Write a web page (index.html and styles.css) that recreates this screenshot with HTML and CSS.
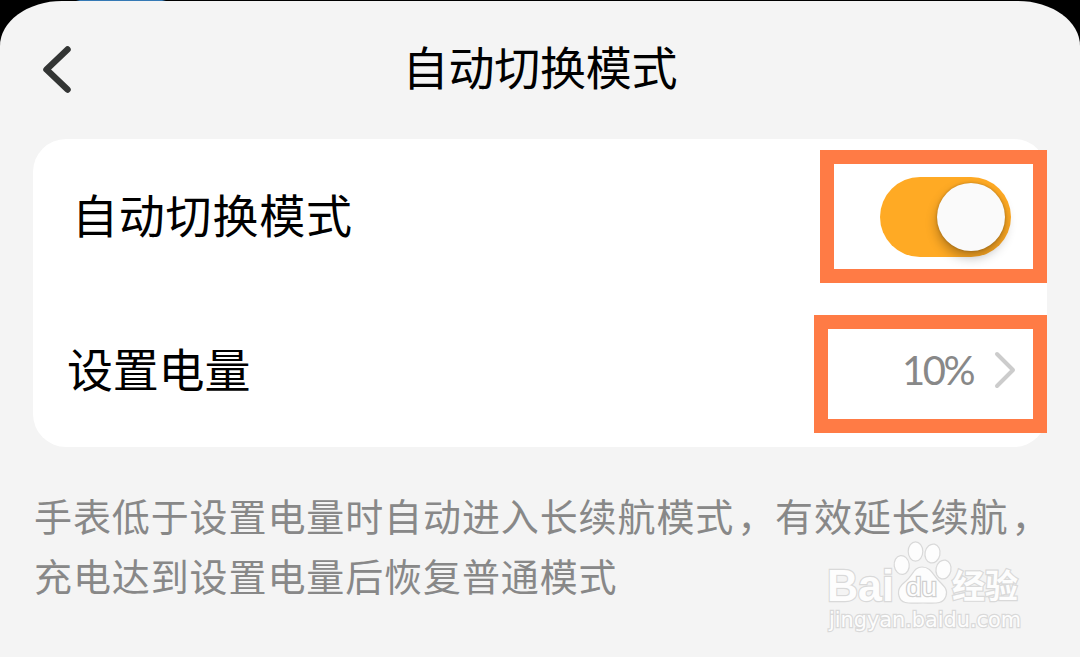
FILE: index.html
```html
<!DOCTYPE html>
<html lang="zh-CN">
<head>
    <meta charset="UTF-8">
    <meta name="viewport" content="width=device-width, initial-scale=1.0">
    <title>自动切换模式</title>
    <link rel="stylesheet" href="styles.css">
</head>
<body>

    <div class="page">
        <!-- Header -->
        <header class="header">
            <svg class="back-icon" width="36" height="54" viewBox="0 0 36 54">
                <path d="M29.5 6.5 L8.5 26.5 L29.5 46.5"/>
            </svg>
            <h1 class="title">自动切换模式</h1>
        </header>

        <!-- Settings -->
        <div class="card">
            <div class="row row-switch">
                <span class="label label-switch">自动切换模式</span>
                <div class="highlight highlight-switch">
                    <div class="switch"><div class="knob"></div></div>
                </div>
            </div>
            <div class="row row-battery">
                <span class="label label-battery">设置电量</span>
                <div class="highlight highlight-battery">
                    <span class="value">10%</span>
                    <svg class="arrow-icon" width="22" height="40" viewBox="0 0 22 40">
                        <path d="M3 4 L19 20 L3 36"/>
                    </svg>
                </div>
            </div>
        </div>

        <p class="hint">手表低于设置电量时自动进入长续航模式<span class="comma">，</span>有效延长续航<span class="comma">，</span><br>充电达到设置电量后恢复普通模式</p>

        <!-- Watermark -->
        <svg class="watermark" width="210" height="100" viewBox="0 0 210 100">
            <g class="mark">
                <text class="mark-brand" x="1" y="62" textLength="67" lengthAdjust="spacingAndGlyphs">Bai</text>
                <ellipse cx="75.7" cy="26" rx="7.5" ry="9.5" transform="rotate(-8 75.7 26)"/>
                <ellipse cx="89.5" cy="12.5" rx="7.3" ry="9.7"/>
                <ellipse cx="106.5" cy="14.5" rx="7.5" ry="9.5" transform="rotate(12 106.5 14.5)"/>
                <ellipse cx="117.5" cy="30.5" rx="7.5" ry="9.5" transform="rotate(12 117.5 30.5)"/>
                <path d="M96 28 C105 28 107 36 113 42 C119 48 122 51 120 57 C117 66 108 64 97 64 C85 64 75 66 73 57 C71 50 75 46 80 42 C87 36 88 28 96 28 Z"/>
                <text class="mark-du" x="80" y="57" textLength="31" lengthAdjust="spacingAndGlyphs">du</text>
                <text class="mark-cn" x="126" y="59" textLength="66" lengthAdjust="spacingAndGlyphs">经验</text>
                <text class="mark-url" x="3" y="88" textLength="192" lengthAdjust="spacingAndGlyphs">jingyan.baidu.com</text>
            </g>
        </svg>
    </div>

</body>
</html>
```
FILE: styles.css
```css
* {
    box-sizing: border-box;
}

body {
    margin: 0;
    padding-top: 1px;
    height: 657px;
    overflow: hidden;
    font-family: "Noto Sans CJK SC", sans-serif;
    background: linear-gradient(to right, #000 76px, #3579b5 80px, #3579b5 162px, #000 166px);
    background-size: 100% 1px;
    background-repeat: no-repeat;
    background-color: #000;
}

.page {
    position: relative;
    height: 656px;
    background-color: #f4f4f4;
    border-radius: 62px 62px 0 0 / 45px 45px 0 0;
}

.header {
    display: flex;
    align-items: center;
    height: 138px;
    padding: 0 36px 0 38px;
}

.back-icon {
    fill: none;
    stroke: #333534;
    stroke-width: 6.5;
    stroke-linecap: round;
    stroke-linejoin: round;
}

.title {
    flex: 1;
    margin: 0 38px 10px 0;
    font-size: 46px;
    line-height: 64px;
    font-weight: 400;
    letter-spacing: -0.2px;
    text-align: center;
    color: #000;
}

/* Settings card */
.card {
    display: flex;
    flex-direction: column;
    gap: 32px;
    height: 308px;
    margin: 0 33px;
    padding: 11px 0 14px;
    background-color: #fff;
    border-radius: 33px;
}

.row {
    display: flex;
    align-items: center;
    justify-content: space-between;
}

.label {
    font-size: 46px;
    line-height: 64px;
    color: #000;
}

.label-switch {
    padding: 0 0 8px 39px;
    letter-spacing: 0.8px;
}

.label-battery {
    padding: 0 0 14px 34px;
    letter-spacing: -0.2px;
}

.highlight {
    display: flex;
    align-items: center;
    justify-content: flex-end;
    border: 14px solid #ff7b45;
}

.highlight-switch {
    width: 227px;
    height: 133px;
    padding-right: 22px;
}

.highlight-battery {
    width: 233px;
    height: 118px;
    padding: 0 17px 8px 0;
    gap: 21px;
}

.switch {
    display: flex;
    align-items: center;
    justify-content: flex-end;
    width: 131px;
    height: 80px;
    padding-right: 6px;
    border-radius: 40px;
    background-color: #ffaa24;
}

.knob {
    width: 68px;
    height: 68px;
    border-radius: 50%;
    background-color: #fafafa;
    box-shadow: 0 6px 12px rgba(0, 0, 0, 0.3), 0 0 3px rgba(0, 0, 0, 0.25);
}

.value {
    font-family: Lato, sans-serif;
    font-size: 40px;
    letter-spacing: -2.5px;
    color: #888;
}

.arrow-icon {
    fill: none;
    stroke: #ccc;
    stroke-width: 4;
    stroke-linecap: round;
    stroke-linejoin: round;
}

.hint {
    margin: 38px 0 0 34px;
    font-size: 38px;
    line-height: 60px;
    letter-spacing: 0.9px;
    white-space: nowrap;
    color: #888;
}

.comma {
    padding-left: 3px;
    margin-right: -1px;
}

/* Watermark lies over the page corner */
.watermark {
    position: absolute;
    right: 44px;
    bottom: 18px;
}

.mark {
    fill: #fdfdfd;
    stroke: #d9d9d9;
    stroke-width: 1.2;
}

.mark text {
    paint-order: stroke;
    stroke-width: 2.4;
    font-family: "Liberation Sans", "Noto Sans CJK SC", sans-serif;
}

.mark .mark-brand {
    font-size: 45px;
    font-weight: 700;
}

.mark .mark-du {
    font-size: 26px;
    stroke: #cfcfcf;
}

.mark .mark-cn {
    font-family: "Noto Sans CJK SC", sans-serif;
    font-size: 33px;
    font-weight: 700;
}

.mark .mark-url {
    font-family: "DejaVu Sans", sans-serif;
    font-size: 21px;
}
```
